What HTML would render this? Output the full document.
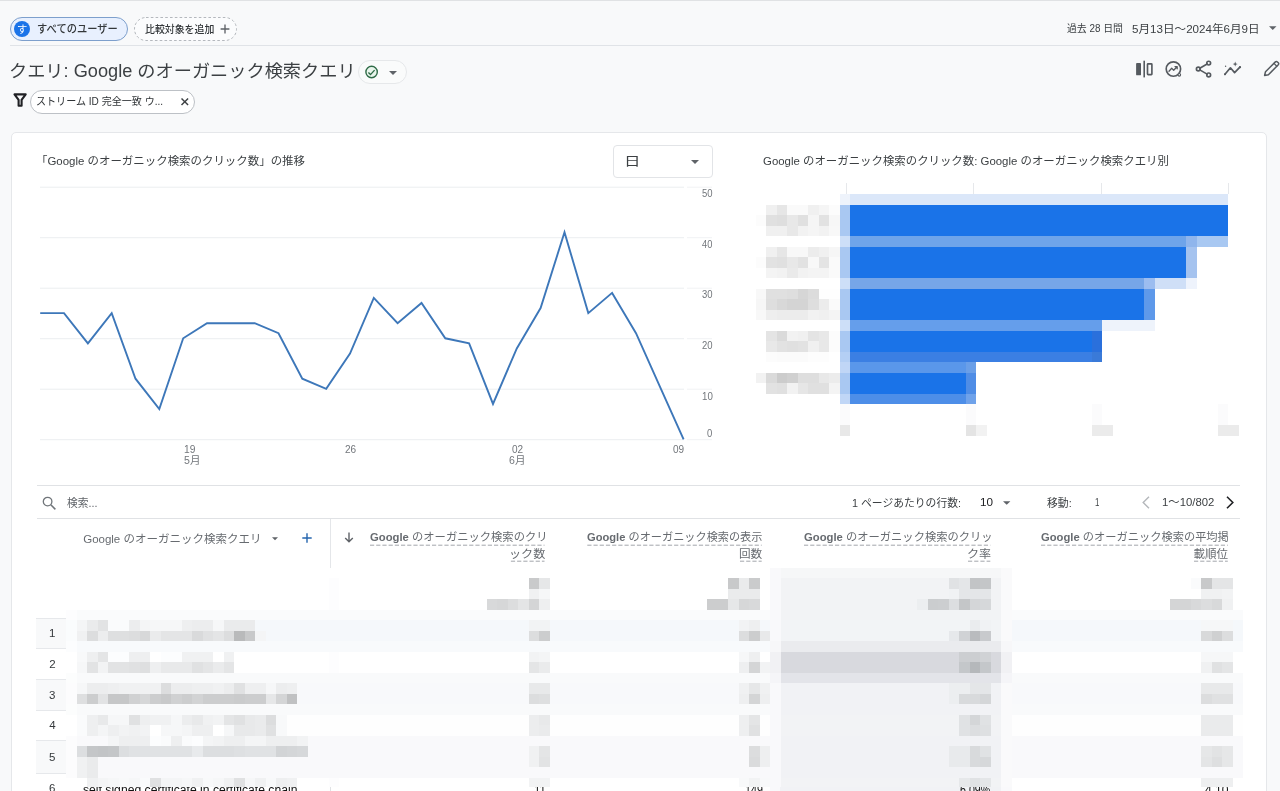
<!DOCTYPE html>
<html lang="ja"><head><meta charset="utf-8"><title>クエリ: Google のオーガニック検索クエリ</title>
<style>
*{box-sizing:border-box;margin:0;padding:0}
html,body{width:1280px;height:791px;overflow:hidden;background:#f8f9fa}
body{position:relative;font-family:"Liberation Sans","Noto Sans CJK JP",sans-serif}
.a{position:absolute}
.L{position:absolute;left:0;top:0;width:1280px;height:791px;will-change:transform}
.t{position:absolute;white-space:nowrap;line-height:1;transform-origin:0 50%;display:block}
svg{position:absolute;overflow:visible}
</style></head>
<body>
<div class="a" style="left:0;top:0;width:1280px;height:1px;background:#e0e2e4"></div>
<div class="a" style="left:10px;top:45px;width:1270px;height:1px;background:#e0e3e7"></div>
<div class="a" style="left:10px;top:17px;width:118px;height:24px;border:1px solid #7d9fcc;border-radius:12px;background:#e8f0fe"></div>
<div class="a" style="left:14px;top:21px;width:16px;height:16px;border-radius:8px;background:#1a73e8"></div>
<svg style="left:134px;top:17px" width="103" height="24" viewBox="0 0 103 24"><rect x="0.5" y="0.5" width="102" height="23" rx="11.5" fill="#fbfcfd" stroke="#b4b8bd" stroke-width="1" stroke-dasharray="2.6 2.2"/></svg>
<svg style="left:220.4px;top:23.6px" width="10" height="10" viewBox="0 0 10 10"><path d="M5 0.6v8.8M0.6 5h8.8" stroke="#5f6368" stroke-width="1.35" fill="none"/></svg>
<svg style="left:1268.5px;top:26px" width="7.5" height="4" viewBox="0 0 8 4"><path d="M0 0h8L4 4z" fill="#5f6368"/></svg>
<div class="a" style="left:357.5px;top:60px;width:49px;height:23.5px;border:1px solid #e6e8ea;border-radius:12px;background:#fafbfb"></div>
<svg style="left:364px;top:65px" width="15" height="15" viewBox="0 0 15 15"><circle cx="7.6" cy="7" r="5.7" fill="#e9f5ec" stroke="#2f6b47" stroke-width="1.4"/><path d="M4.4 7.5l2.1 2.1 4.1-4.5" fill="none" stroke="#2f6b47" stroke-width="1.4"/></svg>
<svg style="left:388.5px;top:70.5px" width="8" height="4" viewBox="0 0 8 4"><path d="M0 0h8L4 4z" fill="#5f6368"/></svg>
<svg style="left:13px;top:93px" width="14" height="14" viewBox="0 0 14 14"><path d="M1.5 1.4h11.2L8.6 6.9v5.8H5.6V6.9z" fill="none" stroke="#202124" stroke-width="2.1" stroke-linejoin="round"/></svg>
<div class="a" style="left:30px;top:90px;width:165px;height:24px;border:1px solid #bdc1c6;border-radius:12px;background:#ffffff"></div>
<svg style="left:180.9px;top:97.7px" width="7.6" height="7.6" viewBox="0 0 9 9"><path d="M0.6 0.6l7.8 7.8M8.4 0.6l-7.8 7.8" stroke="#3c4043" stroke-width="1.7" fill="none"/></svg>
<svg style="left:1125px;top:52px" width="155" height="40" viewBox="0 0 155 40" fill="none" stroke="#555a5f" stroke-width="1.65" stroke-linecap="round" stroke-linejoin="round"><rect x="11.1" y="11.1" width="4.9" height="12.2" rx="0.9" fill="#555a5f" stroke="none"/><rect x="18.4" y="8.7" width="1.6" height="16.7" fill="#555a5f" stroke="none"/><rect x="22.5" y="11.8" width="4.4" height="10.8" rx="0.6"/><circle cx="48.4" cy="17" r="7.2"/><path d="M44 19.2l2.7-2.9 2 1.9 3.3-3.4M50 14.6h2.2v2.2" stroke-width="1.3"/><circle cx="54.3" cy="22.8" r="1.3" fill="#f8f9fa" stroke-width="1.1"/><path d="M74.8 16.2l7.3-4.2M74.8 17.9l7.3 4.2"/><circle cx="73.3" cy="17" r="1.9"/><circle cx="83.7" cy="11.1" r="1.9"/><circle cx="83.7" cy="22.9" r="1.9"/><path d="M100 22.3l5.4-6.5 4.2 4.8 5.3-5.4" stroke-width="1.7"/><circle cx="100" cy="22.3" r="1" fill="#555a5f" stroke="none"/><circle cx="115" cy="15.2" r="1.1" fill="#555a5f" stroke="none"/><path d="M110.2 9.6l.7 1.8 1.8.7-1.8.7-.7 1.8-.7-1.8-1.8-.7 1.8-.7z" fill="#555a5f" stroke="none"/><circle cx="100.6" cy="14.2" r="0.7" fill="#555a5f" stroke="none"/><path d="M139.6 23.4l.9-3.6 9.9-9.9a1.4 1.4 0 0 1 2 0l.9.9a1.4 1.4 0 0 1 0 2l-9.9 9.9z" stroke-width="1.5"/><path d="M149 11.4l2.8 2.8" stroke-width="1.3"/></svg>
<div class="a" style="left:10.5px;top:132px;width:1256.5px;height:700px;border:1px solid #e5e7ea;border-radius:5px;background:#ffffff"></div>
<div class="a" style="left:613px;top:145px;width:100px;height:33px;border:1px solid #e2e4e7;border-radius:4px;background:#ffffff"></div>
<svg style="left:691px;top:160px" width="8" height="4" viewBox="0 0 8 4"><path d="M0 0h8L4 4z" fill="#5f6368"/></svg>
<svg style="left:0;top:0" width="1280" height="791" viewBox="0 0 1280 791"><rect x="40" y="186.7" width="644" height="1" fill="#eceef0"/><rect x="40" y="237.2" width="644" height="1" fill="#eceef0"/><rect x="40" y="287.7" width="644" height="1" fill="#eceef0"/><rect x="40" y="338.2" width="644" height="1" fill="#eceef0"/><rect x="40" y="388.7" width="644" height="1" fill="#eceef0"/><rect x="40" y="439.2" width="644" height="1" fill="#eceef0"/><rect x="687" y="186.7" width="25" height="1" fill="#f1f2f4"/><rect x="687" y="237.2" width="25" height="1" fill="#f1f2f4"/><rect x="687" y="287.7" width="25" height="1" fill="#f1f2f4"/><rect x="687" y="338.2" width="25" height="1" fill="#f1f2f4"/><rect x="687" y="388.7" width="25" height="1" fill="#f1f2f4"/><rect x="687" y="439.2" width="25" height="1" fill="#f1f2f4"/><polyline points="40.2,313.1 64.0,313.1 87.9,343.4 111.7,313.1 135.5,378.7 159.3,409.0 183.2,338.3 207.0,323.2 230.8,323.2 254.7,323.2 278.5,333.2 302.3,378.7 326.2,388.8 350.0,353.5 373.8,297.9 397.6,323.2 421.5,303.0 445.3,338.3 469.1,343.4 493.0,403.9 516.8,348.4 540.6,308.0 564.5,232.3 588.3,313.1 612.1,292.9 636.0,333.2 659.8,386.3 683.6,439.3" fill="none" stroke="#3d77b9" stroke-width="1.9" stroke-linejoin="miter"/></svg>
<svg style="left:0;top:0" width="1280" height="791" viewBox="0 0 1280 791" shape-rendering="crispEdges"><rect x="845.9" y="182.5" width="1" height="11.5" fill="#e6e8eb"/><rect x="972.7" y="182.5" width="1" height="11.5" fill="#e6e8eb"/><rect x="1101.0" y="182.5" width="1" height="11.5" fill="#e6e8eb"/><rect x="1228.0" y="182.5" width="1" height="11.5" fill="#e6e8eb"/><rect x="839.50" y="194.00" width="10.50" height="10.50" fill="#eef3fb"/><rect x="850.00" y="194.00" width="378.00" height="10.50" fill="#dbe7f9"/><rect x="839.50" y="204.50" width="10.50" height="10.50" fill="#a9c8f2"/><rect x="850.00" y="204.50" width="378.00" height="10.50" fill="#1a73e8"/><rect x="839.50" y="215.00" width="10.50" height="10.50" fill="#a9c8f2"/><rect x="850.00" y="215.00" width="378.00" height="10.50" fill="#1a73e8"/><rect x="839.50" y="225.50" width="10.50" height="10.50" fill="#a9c8f2"/><rect x="850.00" y="225.50" width="378.00" height="10.50" fill="#1a73e8"/><rect x="839.50" y="236.00" width="10.50" height="10.50" fill="#cddff8"/><rect x="850.00" y="236.00" width="336.00" height="10.50" fill="#6ea4ea"/><rect x="1186.00" y="236.00" width="10.50" height="10.50" fill="#8fb5ec"/><rect x="1196.50" y="236.00" width="31.50" height="10.50" fill="#a8c8f2"/><rect x="839.50" y="246.50" width="10.50" height="10.50" fill="#a9c8f2"/><rect x="850.00" y="246.50" width="336.00" height="10.50" fill="#1a73e8"/><rect x="1186.00" y="246.50" width="10.50" height="10.50" fill="#a5c3ef"/><rect x="839.50" y="257.00" width="10.50" height="10.50" fill="#a9c8f2"/><rect x="850.00" y="257.00" width="336.00" height="10.50" fill="#1a73e8"/><rect x="1186.00" y="257.00" width="10.50" height="10.50" fill="#a5c3ef"/><rect x="839.50" y="267.50" width="10.50" height="10.50" fill="#a9c8f2"/><rect x="850.00" y="267.50" width="336.00" height="10.50" fill="#1a73e8"/><rect x="1186.00" y="267.50" width="10.50" height="10.50" fill="#a5c3ef"/><rect x="839.50" y="278.00" width="10.50" height="10.50" fill="#cddff8"/><rect x="850.00" y="278.00" width="294.00" height="10.50" fill="#76a6e8"/><rect x="1144.00" y="278.00" width="10.50" height="10.50" fill="#9cbdf0"/><rect x="1154.50" y="278.00" width="31.50" height="10.50" fill="#cfdff7"/><rect x="1186.00" y="278.00" width="10.50" height="10.50" fill="#eef3fc"/><rect x="839.50" y="288.50" width="10.50" height="10.50" fill="#a9c8f2"/><rect x="850.00" y="288.50" width="294.00" height="10.50" fill="#1a73e8"/><rect x="1144.00" y="288.50" width="10.50" height="10.50" fill="#5e99ea"/><rect x="839.50" y="299.00" width="10.50" height="10.50" fill="#a9c8f2"/><rect x="850.00" y="299.00" width="294.00" height="10.50" fill="#1a73e8"/><rect x="1144.00" y="299.00" width="10.50" height="10.50" fill="#5e99ea"/><rect x="839.50" y="309.50" width="10.50" height="10.50" fill="#a9c8f2"/><rect x="850.00" y="309.50" width="294.00" height="10.50" fill="#1a73e8"/><rect x="1144.00" y="309.50" width="10.50" height="10.50" fill="#5e99ea"/><rect x="839.50" y="320.00" width="10.50" height="10.50" fill="#cddff8"/><rect x="850.00" y="320.00" width="252.00" height="10.50" fill="#659eeb"/><rect x="1102.00" y="320.00" width="52.50" height="10.50" fill="#eef3fb"/><rect x="839.50" y="330.50" width="10.50" height="10.50" fill="#a9c8f2"/><rect x="850.00" y="330.50" width="241.50" height="10.50" fill="#1a73e8"/><rect x="1091.50" y="330.50" width="10.50" height="10.50" fill="#2a70dc"/><rect x="839.50" y="341.00" width="10.50" height="10.50" fill="#a9c8f2"/><rect x="850.00" y="341.00" width="241.50" height="10.50" fill="#1a73e8"/><rect x="1091.50" y="341.00" width="10.50" height="10.50" fill="#2a70dc"/><rect x="839.50" y="351.50" width="10.50" height="10.50" fill="#b4cff4"/><rect x="850.00" y="351.50" width="241.50" height="10.50" fill="#3b7fe3"/><rect x="1091.50" y="351.50" width="10.50" height="10.50" fill="#3a7ad8"/><rect x="839.50" y="362.00" width="10.50" height="10.50" fill="#c0d6f6"/><rect x="850.00" y="362.00" width="115.50" height="10.50" fill="#5a97ea"/><rect x="965.50" y="362.00" width="10.50" height="10.50" fill="#6a9fe8"/><rect x="839.50" y="372.50" width="10.50" height="10.50" fill="#a9c8f2"/><rect x="850.00" y="372.50" width="115.50" height="10.50" fill="#1a73e8"/><rect x="965.50" y="372.50" width="10.50" height="10.50" fill="#4f8de6"/><rect x="839.50" y="383.00" width="10.50" height="10.50" fill="#a9c8f2"/><rect x="850.00" y="383.00" width="115.50" height="10.50" fill="#1a73e8"/><rect x="965.50" y="383.00" width="10.50" height="10.50" fill="#4f8de6"/><rect x="839.50" y="393.50" width="10.50" height="10.50" fill="#c0d6f6"/><rect x="850.00" y="393.50" width="115.50" height="10.50" fill="#4d8ee8"/><rect x="965.50" y="393.50" width="10.50" height="10.50" fill="#6fa2ea"/><rect x="839.50" y="404.00" width="10.50" height="10.50" fill="#fbfbfc"/><rect x="965.50" y="404.00" width="10.50" height="10.50" fill="#fbfbfc"/><rect x="1091.50" y="404.00" width="10.50" height="10.50" fill="#fbfbfc"/><rect x="1217.50" y="404.00" width="10.50" height="10.50" fill="#fbfbfc"/><rect x="839.50" y="414.50" width="10.50" height="10.50" fill="#fbfbfc"/><rect x="965.50" y="414.50" width="10.50" height="10.50" fill="#fbfbfc"/><rect x="1091.50" y="414.50" width="10.50" height="10.50" fill="#fbfbfc"/><rect x="1217.50" y="414.50" width="10.50" height="10.50" fill="#fbfbfc"/><rect x="839.50" y="425.00" width="10.50" height="10.50" fill="#e8e8e8"/><rect x="965.50" y="425.00" width="10.50" height="10.50" fill="#e4e4e4"/><rect x="976.00" y="425.00" width="10.50" height="10.50" fill="#f2f2f2"/><rect x="1091.50" y="425.00" width="21.00" height="10.50" fill="#ebebeb"/><rect x="1217.50" y="425.00" width="21.00" height="10.50" fill="#ebebeb"/><rect x="766.00" y="204.50" width="10.50" height="10.50" fill="#f0f0f0"/><rect x="776.50" y="204.50" width="10.50" height="10.50" fill="#e6e6e6"/><rect x="787.00" y="204.50" width="10.50" height="10.50" fill="#fafafa"/><rect x="797.50" y="204.50" width="10.50" height="10.50" fill="#fafafa"/><rect x="808.00" y="204.50" width="10.50" height="10.50" fill="#f0f0f0"/><rect x="818.50" y="204.50" width="10.50" height="10.50" fill="#f5f5f5"/><rect x="829.00" y="204.50" width="10.50" height="10.50" fill="#fcfcfc"/><rect x="755.50" y="215.00" width="10.50" height="10.50" fill="#fcfcfc"/><rect x="766.00" y="215.00" width="10.50" height="10.50" fill="#e0e0e0"/><rect x="776.50" y="215.00" width="10.50" height="10.50" fill="#dedede"/><rect x="787.00" y="215.00" width="10.50" height="10.50" fill="#e8e8e8"/><rect x="797.50" y="215.00" width="10.50" height="10.50" fill="#e0e0e0"/><rect x="808.00" y="215.00" width="10.50" height="10.50" fill="#f5f5f5"/><rect x="818.50" y="215.00" width="10.50" height="10.50" fill="#e2e2e2"/><rect x="829.00" y="215.00" width="10.50" height="10.50" fill="#f7f7f7"/><rect x="766.00" y="225.50" width="10.50" height="10.50" fill="#f0f0f0"/><rect x="776.50" y="225.50" width="10.50" height="10.50" fill="#f0f0f0"/><rect x="787.00" y="225.50" width="10.50" height="10.50" fill="#e8e8e8"/><rect x="797.50" y="225.50" width="10.50" height="10.50" fill="#f2f2f2"/><rect x="808.00" y="225.50" width="10.50" height="10.50" fill="#f5f5f5"/><rect x="818.50" y="225.50" width="10.50" height="10.50" fill="#f2f2f2"/><rect x="829.00" y="225.50" width="10.50" height="10.50" fill="#f8f8f8"/><rect x="766.00" y="246.50" width="10.50" height="10.50" fill="#f0f0f0"/><rect x="776.50" y="246.50" width="10.50" height="10.50" fill="#e6e6e6"/><rect x="787.00" y="246.50" width="10.50" height="10.50" fill="#f8f8f8"/><rect x="797.50" y="246.50" width="10.50" height="10.50" fill="#f8f8f8"/><rect x="808.00" y="246.50" width="10.50" height="10.50" fill="#ececec"/><rect x="818.50" y="246.50" width="10.50" height="10.50" fill="#f0f0f0"/><rect x="829.00" y="246.50" width="10.50" height="10.50" fill="#f6f6f6"/><rect x="755.50" y="257.00" width="10.50" height="10.50" fill="#fcfcfc"/><rect x="766.00" y="257.00" width="10.50" height="10.50" fill="#e2e2e2"/><rect x="776.50" y="257.00" width="10.50" height="10.50" fill="#e0e0e0"/><rect x="787.00" y="257.00" width="10.50" height="10.50" fill="#e8e8e8"/><rect x="797.50" y="257.00" width="10.50" height="10.50" fill="#e2e2e2"/><rect x="808.00" y="257.00" width="10.50" height="10.50" fill="#f8f8f8"/><rect x="818.50" y="257.00" width="10.50" height="10.50" fill="#e4e4e4"/><rect x="829.00" y="257.00" width="10.50" height="10.50" fill="#fafafa"/><rect x="766.00" y="267.50" width="10.50" height="10.50" fill="#f4f4f4"/><rect x="776.50" y="267.50" width="10.50" height="10.50" fill="#f2f2f2"/><rect x="787.00" y="267.50" width="10.50" height="10.50" fill="#eaeaea"/><rect x="797.50" y="267.50" width="10.50" height="10.50" fill="#f2f2f2"/><rect x="808.00" y="267.50" width="10.50" height="10.50" fill="#f4f4f4"/><rect x="818.50" y="267.50" width="10.50" height="10.50" fill="#f4f4f4"/><rect x="829.00" y="267.50" width="10.50" height="10.50" fill="#fafafa"/><rect x="755.50" y="288.50" width="10.50" height="10.50" fill="#f8f8f8"/><rect x="766.00" y="288.50" width="10.50" height="10.50" fill="#e0e0e0"/><rect x="776.50" y="288.50" width="10.50" height="10.50" fill="#e0e0e0"/><rect x="787.00" y="288.50" width="10.50" height="10.50" fill="#dedede"/><rect x="797.50" y="288.50" width="10.50" height="10.50" fill="#d6d6d6"/><rect x="808.00" y="288.50" width="10.50" height="10.50" fill="#dcdcdc"/><rect x="818.50" y="288.50" width="10.50" height="10.50" fill="#fefefe"/><rect x="829.00" y="288.50" width="10.50" height="10.50" fill="#fefefe"/><rect x="755.50" y="299.00" width="10.50" height="10.50" fill="#f6f6f6"/><rect x="766.00" y="299.00" width="10.50" height="10.50" fill="#dedede"/><rect x="776.50" y="299.00" width="10.50" height="10.50" fill="#d8d8d8"/><rect x="787.00" y="299.00" width="10.50" height="10.50" fill="#d4d4d4"/><rect x="797.50" y="299.00" width="10.50" height="10.50" fill="#d4d4d4"/><rect x="808.00" y="299.00" width="10.50" height="10.50" fill="#dedede"/><rect x="818.50" y="299.00" width="10.50" height="10.50" fill="#ececec"/><rect x="829.00" y="299.00" width="10.50" height="10.50" fill="#fafafa"/><rect x="755.50" y="309.50" width="10.50" height="10.50" fill="#f8f8f8"/><rect x="766.00" y="309.50" width="10.50" height="10.50" fill="#eeeeee"/><rect x="776.50" y="309.50" width="10.50" height="10.50" fill="#ececec"/><rect x="787.00" y="309.50" width="10.50" height="10.50" fill="#ececec"/><rect x="797.50" y="309.50" width="10.50" height="10.50" fill="#ececec"/><rect x="808.00" y="309.50" width="10.50" height="10.50" fill="#f2f2f2"/><rect x="818.50" y="309.50" width="10.50" height="10.50" fill="#f0f0f0"/><rect x="829.00" y="309.50" width="10.50" height="10.50" fill="#f4f4f4"/><rect x="766.00" y="330.50" width="10.50" height="10.50" fill="#e4e4e4"/><rect x="776.50" y="330.50" width="10.50" height="10.50" fill="#dadada"/><rect x="787.00" y="330.50" width="10.50" height="10.50" fill="#f2f2f2"/><rect x="797.50" y="330.50" width="10.50" height="10.50" fill="#f0f0f0"/><rect x="808.00" y="330.50" width="10.50" height="10.50" fill="#e4e4e4"/><rect x="818.50" y="330.50" width="10.50" height="10.50" fill="#e8e8e8"/><rect x="829.00" y="330.50" width="10.50" height="10.50" fill="#fcfcfc"/><rect x="766.00" y="341.00" width="10.50" height="10.50" fill="#e8e8e8"/><rect x="776.50" y="341.00" width="10.50" height="10.50" fill="#e2e2e2"/><rect x="787.00" y="341.00" width="10.50" height="10.50" fill="#e0e0e0"/><rect x="797.50" y="341.00" width="10.50" height="10.50" fill="#e2e2e2"/><rect x="808.00" y="341.00" width="10.50" height="10.50" fill="#f0f0f0"/><rect x="818.50" y="341.00" width="10.50" height="10.50" fill="#e8e8e8"/><rect x="829.00" y="341.00" width="10.50" height="10.50" fill="#fcfcfc"/><rect x="766.00" y="351.50" width="10.50" height="10.50" fill="#fcfcfc"/><rect x="776.50" y="351.50" width="10.50" height="10.50" fill="#fbfbfb"/><rect x="787.00" y="351.50" width="10.50" height="10.50" fill="#fbfbfb"/><rect x="797.50" y="351.50" width="10.50" height="10.50" fill="#fbfbfb"/><rect x="808.00" y="351.50" width="10.50" height="10.50" fill="#fdfdfd"/><rect x="818.50" y="351.50" width="10.50" height="10.50" fill="#fdfdfd"/><rect x="755.50" y="372.50" width="10.50" height="10.50" fill="#f2f2f2"/><rect x="766.00" y="372.50" width="10.50" height="10.50" fill="#dadada"/><rect x="776.50" y="372.50" width="10.50" height="10.50" fill="#cccccc"/><rect x="787.00" y="372.50" width="10.50" height="10.50" fill="#d0d0d0"/><rect x="797.50" y="372.50" width="10.50" height="10.50" fill="#dedede"/><rect x="808.00" y="372.50" width="10.50" height="10.50" fill="#dedede"/><rect x="818.50" y="372.50" width="10.50" height="10.50" fill="#e8e8e8"/><rect x="829.00" y="372.50" width="10.50" height="10.50" fill="#ececec"/><rect x="766.00" y="383.00" width="10.50" height="10.50" fill="#e2e2e2"/><rect x="776.50" y="383.00" width="10.50" height="10.50" fill="#e0e0e0"/><rect x="787.00" y="383.00" width="10.50" height="10.50" fill="#f2f2f2"/><rect x="797.50" y="383.00" width="10.50" height="10.50" fill="#e6e6e6"/><rect x="808.00" y="383.00" width="10.50" height="10.50" fill="#e0e0e0"/><rect x="818.50" y="383.00" width="10.50" height="10.50" fill="#e0e0e0"/><rect x="829.00" y="383.00" width="10.50" height="10.50" fill="#f4f4f4"/></svg>
<div class="a" style="left:37px;top:485px;width:1203px;height:1px;background:#e0e2e5"></div>
<div class="a" style="left:37px;top:518px;width:1203px;height:1px;background:#e0e2e5"></div>
<svg style="left:42px;top:496px" width="15" height="15" viewBox="0 0 15 15"><circle cx="5.6" cy="5.6" r="4.3" fill="none" stroke="#70757a" stroke-width="1.3"/><path d="M8.8 8.8l4.6 4.6" stroke="#70757a" stroke-width="1.5"/></svg>
<svg style="left:1003px;top:500.5px" width="7.4" height="4" viewBox="0 0 8 4"><path d="M0 0h8L4 4z" fill="#5f6368"/></svg>
<svg style="left:1141.5px;top:496px" width="8" height="13" viewBox="0 0 8 13"><path d="M7 0.8L1.2 6.5 7 12.2" fill="none" stroke="#b4b7bb" stroke-width="1.4"/></svg>
<svg style="left:1226px;top:496px" width="8" height="13" viewBox="0 0 8 13"><path d="M1 0.8l5.8 5.7L1 12.2" fill="none" stroke="#202124" stroke-width="1.6"/></svg>
<svg style="left:272px;top:537.3px" width="6" height="3.4" viewBox="0 0 8 4"><path d="M0 0h8L4 4z" fill="#5f6368"/></svg>
<svg style="left:302px;top:533px" width="10" height="10" viewBox="0 0 10 10"><path d="M5 0.3v9.4M0.3 5h9.4" stroke="#2565ae" stroke-width="1.4" fill="none"/></svg>
<div class="a" style="left:330px;top:519px;width:1px;height:49px;background:#e4e6e9"></div>
<svg style="left:344px;top:532px" width="10" height="11" viewBox="0 0 10 11"><path d="M5 0.5v9M1.2 6l3.8 3.8L8.8 6" fill="none" stroke="#5f6368" stroke-width="1.4"/></svg>
<svg style="left:0;top:0" width="1280" height="791" viewBox="0 0 1280 791" fill="none" stroke="#a2a6ab" stroke-width="1" stroke-dasharray="4.2 2"><path d="M370.0 545.2H544.5 M510.9 561.2H544.5"/><path d="M587.3 545.2H761.7 M740.0 561.2H761.7"/><path d="M804.0 545.2H990.3 M968.0 561.2H990.3"/><path d="M1041.0 545.2H1227.8 M1194.0 561.2H1227.8"/></svg>
<div class="a" style="left:330px;top:786px;width:1px;height:6px;background:#e0e2e5"></div>
<div class="a" style="left:769.75px;top:786px;width:242px;height:6px;background:#f9f9fb"></div>
<div class="a" style="left:780.25px;top:786px;width:220.5px;height:6px;background:#f1f2f5"></div>
<div class="L"><span class="t" style="left:82.75px;top:784px;font-size:12px;color:#111111;transform:scaleX(1.0143);">self signed certificate in certificate chain</span>
<span class="t" style="left:533.55px;top:784px;font-size:12px;color:#111111;transform:scaleX(0.9545);">11</span>
<span class="t" style="left:744.61px;top:784px;font-size:12px;color:#111111;transform:scaleX(0.8919);">149</span>
<span class="t" style="left:960.36px;top:784px;font-size:12px;color:#111111;transform:scaleX(0.8872);">6.09%</span>
<span class="t" style="left:1204.75px;top:784px;font-size:12px;color:#111111;transform:scaleX(1.0110);">4.10</span></div>
<svg style="left:0;top:0" width="1280" height="791" viewBox="0 0 1280 791" shape-rendering="crispEdges"><rect x="66.24" y="567.50" width="1176.90" height="10.50" fill="#ffffff"/><rect x="770.28" y="567.50" width="10.51" height="10.50" fill="#f9f9fb"/><rect x="780.79" y="567.50" width="220.67" height="10.50" fill="#f6f7f8"/><rect x="1001.45" y="567.50" width="10.51" height="10.50" fill="#fafafb"/><rect x="66.24" y="578.00" width="1176.90" height="10.50" fill="#ffffff"/><rect x="328.94" y="578.00" width="10.51" height="10.50" fill="#fdfdfe"/><rect x="770.28" y="578.00" width="10.51" height="10.50" fill="#f9f9fb"/><rect x="780.79" y="578.00" width="220.67" height="10.50" fill="#f2f3f5"/><rect x="1001.45" y="578.00" width="10.51" height="10.50" fill="#fafafb"/><rect x="66.24" y="588.50" width="1176.90" height="10.50" fill="#ffffff"/><rect x="328.94" y="588.50" width="10.51" height="10.50" fill="#fdfdfe"/><rect x="770.28" y="588.50" width="10.51" height="10.50" fill="#f9f9fb"/><rect x="780.79" y="588.50" width="220.67" height="10.50" fill="#f2f3f5"/><rect x="1001.45" y="588.50" width="10.51" height="10.50" fill="#fafafb"/><rect x="66.24" y="599.00" width="1176.90" height="10.50" fill="#ffffff"/><rect x="328.94" y="599.00" width="10.51" height="10.50" fill="#fdfdfe"/><rect x="770.28" y="599.00" width="10.51" height="10.50" fill="#f9f9fb"/><rect x="780.79" y="599.00" width="220.67" height="10.50" fill="#f2f3f5"/><rect x="1001.45" y="599.00" width="10.51" height="10.50" fill="#fafafb"/><rect x="66.24" y="609.50" width="1176.90" height="10.50" fill="#fafbfc"/><rect x="66.24" y="609.50" width="10.51" height="10.50" fill="#fdfdfe"/><rect x="328.94" y="609.50" width="10.51" height="10.50" fill="#fafbfc"/><rect x="770.28" y="609.50" width="10.51" height="10.50" fill="#f9f9fb"/><rect x="780.79" y="609.50" width="220.67" height="10.50" fill="#f2f3f5"/><rect x="1001.45" y="609.50" width="10.51" height="10.50" fill="#fafafb"/><rect x="66.24" y="620.00" width="1176.90" height="10.50" fill="#f5f8fb"/><rect x="66.24" y="620.00" width="10.51" height="10.50" fill="#fafcfd"/><rect x="328.94" y="620.00" width="10.51" height="10.50" fill="#f5f8fb"/><rect x="770.28" y="620.00" width="10.51" height="10.50" fill="#f9f9fb"/><rect x="780.79" y="620.00" width="220.67" height="10.50" fill="#f2f4f6"/><rect x="1001.45" y="620.00" width="10.51" height="10.50" fill="#fafafb"/><rect x="66.24" y="630.50" width="1176.90" height="10.50" fill="#f5f8fb"/><rect x="66.24" y="630.50" width="10.51" height="10.50" fill="#fafcfd"/><rect x="328.94" y="630.50" width="10.51" height="10.50" fill="#f5f8fb"/><rect x="770.28" y="630.50" width="10.51" height="10.50" fill="#f9f9fb"/><rect x="780.79" y="630.50" width="220.67" height="10.50" fill="#f2f4f6"/><rect x="1001.45" y="630.50" width="10.51" height="10.50" fill="#fafafb"/><rect x="66.24" y="641.00" width="1176.90" height="10.50" fill="#f8fafc"/><rect x="66.24" y="641.00" width="10.51" height="10.50" fill="#fcfdfe"/><rect x="328.94" y="641.00" width="10.51" height="10.50" fill="#f8fafc"/><rect x="770.28" y="641.00" width="10.51" height="10.50" fill="#f7f7f9"/><rect x="780.79" y="641.00" width="220.67" height="10.50" fill="#eaebee"/><rect x="1001.45" y="641.00" width="10.51" height="10.50" fill="#f7f7f9"/><rect x="66.24" y="651.50" width="1176.90" height="10.50" fill="#ffffff"/><rect x="328.94" y="651.50" width="10.51" height="10.50" fill="#fdfdfe"/><rect x="770.28" y="651.50" width="10.51" height="10.50" fill="#f1f1f4"/><rect x="780.79" y="651.50" width="220.67" height="10.50" fill="#d8d9de"/><rect x="1001.45" y="651.50" width="10.51" height="10.50" fill="#f1f1f4"/><rect x="66.24" y="662.00" width="1176.90" height="10.50" fill="#ffffff"/><rect x="328.94" y="662.00" width="10.51" height="10.50" fill="#fdfdfe"/><rect x="770.28" y="662.00" width="10.51" height="10.50" fill="#f1f1f4"/><rect x="780.79" y="662.00" width="220.67" height="10.50" fill="#d8d9de"/><rect x="1001.45" y="662.00" width="10.51" height="10.50" fill="#f1f1f4"/><rect x="66.24" y="672.50" width="1176.90" height="10.50" fill="#f9fafb"/><rect x="66.24" y="672.50" width="10.51" height="10.50" fill="#fcfdfd"/><rect x="328.94" y="672.50" width="10.51" height="10.50" fill="#f9fafb"/><rect x="770.28" y="672.50" width="10.51" height="10.50" fill="#f5f5f8"/><rect x="780.79" y="672.50" width="220.67" height="10.50" fill="#e3e4e9"/><rect x="1001.45" y="672.50" width="10.51" height="10.50" fill="#f5f5f8"/><rect x="66.24" y="683.00" width="1176.90" height="10.50" fill="#f8f9fb"/><rect x="66.24" y="683.00" width="10.51" height="10.50" fill="#fcfcfd"/><rect x="328.94" y="683.00" width="10.51" height="10.50" fill="#f8f9fb"/><rect x="770.28" y="683.00" width="10.51" height="10.50" fill="#f9f9fb"/><rect x="780.79" y="683.00" width="220.67" height="10.50" fill="#f1f2f5"/><rect x="1001.45" y="683.00" width="10.51" height="10.50" fill="#fafafb"/><rect x="66.24" y="693.50" width="1176.90" height="10.50" fill="#f8f9fb"/><rect x="66.24" y="693.50" width="10.51" height="10.50" fill="#fcfcfd"/><rect x="328.94" y="693.50" width="10.51" height="10.50" fill="#f8f9fb"/><rect x="770.28" y="693.50" width="10.51" height="10.50" fill="#f9f9fb"/><rect x="780.79" y="693.50" width="220.67" height="10.50" fill="#f1f2f5"/><rect x="1001.45" y="693.50" width="10.51" height="10.50" fill="#fafafb"/><rect x="66.24" y="704.00" width="1176.90" height="10.50" fill="#f9fafb"/><rect x="66.24" y="704.00" width="10.51" height="10.50" fill="#fcfdfd"/><rect x="328.94" y="704.00" width="10.51" height="10.50" fill="#f9fafb"/><rect x="770.28" y="704.00" width="10.51" height="10.50" fill="#f9f9fb"/><rect x="780.79" y="704.00" width="220.67" height="10.50" fill="#f1f2f5"/><rect x="1001.45" y="704.00" width="10.51" height="10.50" fill="#fafafb"/><rect x="66.24" y="714.50" width="1176.90" height="10.50" fill="#fefefe"/><rect x="66.24" y="714.50" width="10.51" height="10.50" fill="#ffffff"/><rect x="328.94" y="714.50" width="10.51" height="10.50" fill="#fefefe"/><rect x="770.28" y="714.50" width="10.51" height="10.50" fill="#f9f9fb"/><rect x="780.79" y="714.50" width="220.67" height="10.50" fill="#f2f3f5"/><rect x="1001.45" y="714.50" width="10.51" height="10.50" fill="#fafafb"/><rect x="66.24" y="725.00" width="1176.90" height="10.50" fill="#fefefe"/><rect x="66.24" y="725.00" width="10.51" height="10.50" fill="#ffffff"/><rect x="328.94" y="725.00" width="10.51" height="10.50" fill="#fefefe"/><rect x="770.28" y="725.00" width="10.51" height="10.50" fill="#f9f9fb"/><rect x="780.79" y="725.00" width="220.67" height="10.50" fill="#f2f3f5"/><rect x="1001.45" y="725.00" width="10.51" height="10.50" fill="#fafafb"/><rect x="66.24" y="735.50" width="1176.90" height="10.50" fill="#f9f9fb"/><rect x="66.24" y="735.50" width="10.51" height="10.50" fill="#fcfcfd"/><rect x="328.94" y="735.50" width="10.51" height="10.50" fill="#f9f9fb"/><rect x="770.28" y="735.50" width="10.51" height="10.50" fill="#f9f9fb"/><rect x="780.79" y="735.50" width="220.67" height="10.50" fill="#f1f2f5"/><rect x="1001.45" y="735.50" width="10.51" height="10.50" fill="#fafafb"/><rect x="66.24" y="746.00" width="1176.90" height="10.50" fill="#f9f9fb"/><rect x="66.24" y="746.00" width="10.51" height="10.50" fill="#fcfcfd"/><rect x="328.94" y="746.00" width="10.51" height="10.50" fill="#f9f9fb"/><rect x="770.28" y="746.00" width="10.51" height="10.50" fill="#f9f9fb"/><rect x="780.79" y="746.00" width="220.67" height="10.50" fill="#f1f2f5"/><rect x="1001.45" y="746.00" width="10.51" height="10.50" fill="#fafafb"/><rect x="66.24" y="756.50" width="1176.90" height="10.50" fill="#f9f9fb"/><rect x="66.24" y="756.50" width="10.51" height="10.50" fill="#fcfcfd"/><rect x="328.94" y="756.50" width="10.51" height="10.50" fill="#f9f9fb"/><rect x="770.28" y="756.50" width="10.51" height="10.50" fill="#f9f9fb"/><rect x="780.79" y="756.50" width="220.67" height="10.50" fill="#f1f2f5"/><rect x="1001.45" y="756.50" width="10.51" height="10.50" fill="#fafafb"/><rect x="66.24" y="767.00" width="1176.90" height="10.50" fill="#f9f9fb"/><rect x="66.24" y="767.00" width="10.51" height="10.50" fill="#fcfcfd"/><rect x="328.94" y="767.00" width="10.51" height="10.50" fill="#f9f9fb"/><rect x="770.28" y="767.00" width="10.51" height="10.50" fill="#f9f9fb"/><rect x="780.79" y="767.00" width="220.67" height="10.50" fill="#f1f2f5"/><rect x="1001.45" y="767.00" width="10.51" height="10.50" fill="#fafafb"/><rect x="66.24" y="777.50" width="1176.90" height="9.50" fill="#ffffff"/><rect x="328.94" y="777.50" width="10.51" height="9.50" fill="#fdfdfe"/><rect x="770.28" y="777.50" width="10.51" height="9.50" fill="#f9f9fb"/><rect x="780.79" y="777.50" width="220.67" height="9.50" fill="#f2f3f5"/><rect x="1001.45" y="777.50" width="10.51" height="9.50" fill="#fafafb"/><rect x="76.75" y="620.00" width="10.51" height="10.50" fill="#f4f5f6"/><rect x="87.26" y="620.00" width="10.51" height="10.50" fill="#eaebec"/><rect x="97.77" y="620.00" width="10.51" height="10.50" fill="#e2e3e4"/><rect x="108.27" y="620.00" width="10.51" height="10.50" fill="#fafbfc"/><rect x="118.78" y="620.00" width="10.51" height="10.50" fill="#fafbfc"/><rect x="129.29" y="620.00" width="10.51" height="10.50" fill="#ecedee"/><rect x="139.80" y="620.00" width="10.51" height="10.50" fill="#f4f5f6"/><rect x="150.31" y="620.00" width="10.51" height="10.50" fill="#f6f7f8"/><rect x="160.81" y="620.00" width="10.51" height="10.50" fill="#f6f7f8"/><rect x="171.32" y="620.00" width="10.51" height="10.50" fill="#f6f7f8"/><rect x="181.83" y="620.00" width="10.51" height="10.50" fill="#eeeff0"/><rect x="192.34" y="620.00" width="10.51" height="10.50" fill="#ecedee"/><rect x="202.85" y="620.00" width="10.51" height="10.50" fill="#ecedee"/><rect x="213.35" y="620.00" width="10.51" height="10.50" fill="#f6f7f8"/><rect x="223.86" y="620.00" width="10.51" height="10.50" fill="#eaebec"/><rect x="234.37" y="620.00" width="10.51" height="10.50" fill="#eaebec"/><rect x="244.88" y="620.00" width="10.51" height="10.50" fill="#eaebec"/><rect x="76.75" y="630.50" width="10.51" height="10.50" fill="#f0f1f2"/><rect x="87.26" y="630.50" width="10.51" height="10.50" fill="#dcddde"/><rect x="97.77" y="630.50" width="10.51" height="10.50" fill="#ecedee"/><rect x="108.27" y="630.50" width="10.51" height="10.50" fill="#dedfe0"/><rect x="118.78" y="630.50" width="10.51" height="10.50" fill="#dedfe0"/><rect x="129.29" y="630.50" width="10.51" height="10.50" fill="#dcddde"/><rect x="139.80" y="630.50" width="10.51" height="10.50" fill="#d7d8d9"/><rect x="150.31" y="630.50" width="10.51" height="10.50" fill="#eaebec"/><rect x="160.81" y="630.50" width="10.51" height="10.50" fill="#e4e5e6"/><rect x="171.32" y="630.50" width="10.51" height="10.50" fill="#e4e5e6"/><rect x="181.83" y="630.50" width="10.51" height="10.50" fill="#e4e5e6"/><rect x="192.34" y="630.50" width="10.51" height="10.50" fill="#d9dadb"/><rect x="202.85" y="630.50" width="10.51" height="10.50" fill="#e0e1e2"/><rect x="213.35" y="630.50" width="10.51" height="10.50" fill="#e4e5e6"/><rect x="223.86" y="630.50" width="10.51" height="10.50" fill="#dcddde"/><rect x="234.37" y="630.50" width="10.51" height="10.50" fill="#b9babb"/><rect x="244.88" y="630.50" width="10.51" height="10.50" fill="#c8c9ca"/><rect x="255.39" y="630.50" width="10.51" height="10.50" fill="#f4f5f6"/><rect x="76.75" y="651.50" width="10.51" height="10.50" fill="#f8f9fa"/><rect x="87.26" y="651.50" width="10.51" height="10.50" fill="#eeeff0"/><rect x="97.77" y="651.50" width="10.51" height="10.50" fill="#e4e5e6"/><rect x="108.27" y="651.50" width="10.51" height="10.50" fill="#fcfdfe"/><rect x="118.78" y="651.50" width="10.51" height="10.50" fill="#fcfdfe"/><rect x="129.29" y="651.50" width="10.51" height="10.50" fill="#eeeff0"/><rect x="139.80" y="651.50" width="10.51" height="10.50" fill="#eeeff0"/><rect x="150.31" y="651.50" width="10.51" height="10.50" fill="#ffffff"/><rect x="160.81" y="651.50" width="10.51" height="10.50" fill="#fcfdfe"/><rect x="171.32" y="651.50" width="10.51" height="10.50" fill="#fcfdfe"/><rect x="181.83" y="651.50" width="10.51" height="10.50" fill="#f0f1f2"/><rect x="192.34" y="651.50" width="10.51" height="10.50" fill="#f0f1f2"/><rect x="202.85" y="651.50" width="10.51" height="10.50" fill="#f0f1f2"/><rect x="213.35" y="651.50" width="10.51" height="10.50" fill="#ffffff"/><rect x="223.86" y="651.50" width="10.51" height="10.50" fill="#f0f1f2"/><rect x="76.75" y="662.00" width="10.51" height="10.50" fill="#f6f7f8"/><rect x="87.26" y="662.00" width="10.51" height="10.50" fill="#e2e3e4"/><rect x="97.77" y="662.00" width="10.51" height="10.50" fill="#f2f3f4"/><rect x="108.27" y="662.00" width="10.51" height="10.50" fill="#e2e3e4"/><rect x="118.78" y="662.00" width="10.51" height="10.50" fill="#e2e3e4"/><rect x="129.29" y="662.00" width="10.51" height="10.50" fill="#e0e1e2"/><rect x="139.80" y="662.00" width="10.51" height="10.50" fill="#dedfe0"/><rect x="150.31" y="662.00" width="10.51" height="10.50" fill="#eeeff0"/><rect x="160.81" y="662.00" width="10.51" height="10.50" fill="#e8e9ea"/><rect x="171.32" y="662.00" width="10.51" height="10.50" fill="#e8e9ea"/><rect x="181.83" y="662.00" width="10.51" height="10.50" fill="#e8e9ea"/><rect x="192.34" y="662.00" width="10.51" height="10.50" fill="#e0e1e2"/><rect x="202.85" y="662.00" width="10.51" height="10.50" fill="#e4e5e6"/><rect x="213.35" y="662.00" width="10.51" height="10.50" fill="#eaebec"/><rect x="223.86" y="662.00" width="10.51" height="10.50" fill="#e4e5e6"/><rect x="76.75" y="683.00" width="10.51" height="10.50" fill="#f6f7f8"/><rect x="87.26" y="683.00" width="10.51" height="10.50" fill="#ecedee"/><rect x="97.77" y="683.00" width="10.51" height="10.50" fill="#ecedee"/><rect x="108.27" y="683.00" width="10.51" height="10.50" fill="#eeeff0"/><rect x="118.78" y="683.00" width="10.51" height="10.50" fill="#f0f1f2"/><rect x="129.29" y="683.00" width="10.51" height="10.50" fill="#f0f1f2"/><rect x="139.80" y="683.00" width="10.51" height="10.50" fill="#f0f1f2"/><rect x="150.31" y="683.00" width="10.51" height="10.50" fill="#f0f1f2"/><rect x="160.81" y="683.00" width="10.51" height="10.50" fill="#dcddde"/><rect x="171.32" y="683.00" width="10.51" height="10.50" fill="#ecedee"/><rect x="181.83" y="683.00" width="10.51" height="10.50" fill="#ecedee"/><rect x="192.34" y="683.00" width="10.51" height="10.50" fill="#eeeff0"/><rect x="202.85" y="683.00" width="10.51" height="10.50" fill="#eeeff0"/><rect x="213.35" y="683.00" width="10.51" height="10.50" fill="#f0f1f2"/><rect x="223.86" y="683.00" width="10.51" height="10.50" fill="#ecedee"/><rect x="234.37" y="683.00" width="10.51" height="10.50" fill="#e0e1e2"/><rect x="244.88" y="683.00" width="10.51" height="10.50" fill="#eeeff0"/><rect x="255.39" y="683.00" width="10.51" height="10.50" fill="#eeeff0"/><rect x="265.89" y="683.00" width="10.51" height="10.50" fill="#f6f7f8"/><rect x="276.40" y="683.00" width="10.51" height="10.50" fill="#ecedee"/><rect x="286.91" y="683.00" width="10.51" height="10.50" fill="#eeeff0"/><rect x="76.75" y="693.50" width="10.51" height="10.50" fill="#dedfe0"/><rect x="87.26" y="693.50" width="10.51" height="10.50" fill="#cccdce"/><rect x="97.77" y="693.50" width="10.51" height="10.50" fill="#e2e3e4"/><rect x="108.27" y="693.50" width="10.51" height="10.50" fill="#c6c7c8"/><rect x="118.78" y="693.50" width="10.51" height="10.50" fill="#c6c7c8"/><rect x="129.29" y="693.50" width="10.51" height="10.50" fill="#d0d1d2"/><rect x="139.80" y="693.50" width="10.51" height="10.50" fill="#d6d7d8"/><rect x="150.31" y="693.50" width="10.51" height="10.50" fill="#cccdce"/><rect x="160.81" y="693.50" width="10.51" height="10.50" fill="#c8c9ca"/><rect x="171.32" y="693.50" width="10.51" height="10.50" fill="#d0d1d2"/><rect x="181.83" y="693.50" width="10.51" height="10.50" fill="#cccdce"/><rect x="192.34" y="693.50" width="10.51" height="10.50" fill="#d2d3d4"/><rect x="202.85" y="693.50" width="10.51" height="10.50" fill="#cccdce"/><rect x="213.35" y="693.50" width="10.51" height="10.50" fill="#cccdce"/><rect x="223.86" y="693.50" width="10.51" height="10.50" fill="#cccdce"/><rect x="234.37" y="693.50" width="10.51" height="10.50" fill="#cacbcc"/><rect x="244.88" y="693.50" width="10.51" height="10.50" fill="#cccdce"/><rect x="255.39" y="693.50" width="10.51" height="10.50" fill="#cccdce"/><rect x="265.89" y="693.50" width="10.51" height="10.50" fill="#e6e7e8"/><rect x="276.40" y="693.50" width="10.51" height="10.50" fill="#d4d5d6"/><rect x="286.91" y="693.50" width="10.51" height="10.50" fill="#c0c1c2"/><rect x="76.75" y="714.50" width="10.51" height="10.50" fill="#fafbfc"/><rect x="87.26" y="714.50" width="10.51" height="10.50" fill="#eeeff0"/><rect x="97.77" y="714.50" width="10.51" height="10.50" fill="#e8e9ea"/><rect x="108.27" y="714.50" width="10.51" height="10.50" fill="#f6f7f8"/><rect x="118.78" y="714.50" width="10.51" height="10.50" fill="#f6f7f8"/><rect x="129.29" y="714.50" width="10.51" height="10.50" fill="#e0e1e2"/><rect x="139.80" y="714.50" width="10.51" height="10.50" fill="#eeeff0"/><rect x="150.31" y="714.50" width="10.51" height="10.50" fill="#f0f1f2"/><rect x="160.81" y="714.50" width="10.51" height="10.50" fill="#f0f1f2"/><rect x="171.32" y="714.50" width="10.51" height="10.50" fill="#f6f7f8"/><rect x="181.83" y="714.50" width="10.51" height="10.50" fill="#ecedee"/><rect x="192.34" y="714.50" width="10.51" height="10.50" fill="#e8e9ea"/><rect x="202.85" y="714.50" width="10.51" height="10.50" fill="#f0f1f2"/><rect x="213.35" y="714.50" width="10.51" height="10.50" fill="#f2f3f4"/><rect x="223.86" y="714.50" width="10.51" height="10.50" fill="#e4e5e6"/><rect x="234.37" y="714.50" width="10.51" height="10.50" fill="#e0e1e2"/><rect x="244.88" y="714.50" width="10.51" height="10.50" fill="#e8e9ea"/><rect x="255.39" y="714.50" width="10.51" height="10.50" fill="#eaebec"/><rect x="265.89" y="714.50" width="10.51" height="10.50" fill="#dcddde"/><rect x="276.40" y="714.50" width="10.51" height="10.50" fill="#f8f9fa"/><rect x="76.75" y="725.00" width="10.51" height="10.50" fill="#fafbfc"/><rect x="87.26" y="725.00" width="10.51" height="10.50" fill="#eeeff0"/><rect x="97.77" y="725.00" width="10.51" height="10.50" fill="#f4f5f6"/><rect x="108.27" y="725.00" width="10.51" height="10.50" fill="#eeeff0"/><rect x="118.78" y="725.00" width="10.51" height="10.50" fill="#f2f3f4"/><rect x="129.29" y="725.00" width="10.51" height="10.50" fill="#f0f1f2"/><rect x="139.80" y="725.00" width="10.51" height="10.50" fill="#f2f3f4"/><rect x="150.31" y="725.00" width="10.51" height="10.50" fill="#ffffff"/><rect x="160.81" y="725.00" width="10.51" height="10.50" fill="#f6f7f8"/><rect x="171.32" y="725.00" width="10.51" height="10.50" fill="#f6f7f8"/><rect x="181.83" y="725.00" width="10.51" height="10.50" fill="#f4f5f6"/><rect x="192.34" y="725.00" width="10.51" height="10.50" fill="#eeeff0"/><rect x="202.85" y="725.00" width="10.51" height="10.50" fill="#eeeff0"/><rect x="213.35" y="725.00" width="10.51" height="10.50" fill="#ffffff"/><rect x="223.86" y="725.00" width="10.51" height="10.50" fill="#f6f7f8"/><rect x="234.37" y="725.00" width="10.51" height="10.50" fill="#e8e9ea"/><rect x="244.88" y="725.00" width="10.51" height="10.50" fill="#e8e9ea"/><rect x="255.39" y="725.00" width="10.51" height="10.50" fill="#eaebec"/><rect x="265.89" y="725.00" width="10.51" height="10.50" fill="#e0e1e2"/><rect x="276.40" y="725.00" width="10.51" height="10.50" fill="#f8f9fa"/><rect x="108.27" y="735.50" width="10.51" height="10.50" fill="#f4f5f6"/><rect x="118.78" y="735.50" width="10.51" height="10.50" fill="#eeeff0"/><rect x="129.29" y="735.50" width="10.51" height="10.50" fill="#eeeff0"/><rect x="139.80" y="735.50" width="10.51" height="10.50" fill="#eeeff0"/><rect x="150.31" y="735.50" width="10.51" height="10.50" fill="#fcfdfe"/><rect x="160.81" y="735.50" width="10.51" height="10.50" fill="#fafbfc"/><rect x="171.32" y="735.50" width="10.51" height="10.50" fill="#eeeff0"/><rect x="181.83" y="735.50" width="10.51" height="10.50" fill="#fafbfc"/><rect x="192.34" y="735.50" width="10.51" height="10.50" fill="#fcfdfe"/><rect x="202.85" y="735.50" width="10.51" height="10.50" fill="#f4f5f6"/><rect x="213.35" y="735.50" width="10.51" height="10.50" fill="#f2f3f4"/><rect x="223.86" y="735.50" width="10.51" height="10.50" fill="#eeeff0"/><rect x="234.37" y="735.50" width="10.51" height="10.50" fill="#eeeff0"/><rect x="244.88" y="735.50" width="10.51" height="10.50" fill="#f4f5f6"/><rect x="255.39" y="735.50" width="10.51" height="10.50" fill="#f4f5f6"/><rect x="265.89" y="735.50" width="10.51" height="10.50" fill="#eeeff0"/><rect x="276.40" y="735.50" width="10.51" height="10.50" fill="#eeeff0"/><rect x="286.91" y="735.50" width="10.51" height="10.50" fill="#eeeff0"/><rect x="297.42" y="735.50" width="10.51" height="10.50" fill="#f2f3f4"/><rect x="76.75" y="746.00" width="10.51" height="10.50" fill="#dcdee0"/><rect x="87.26" y="746.00" width="10.51" height="10.50" fill="#c4c6c8"/><rect x="97.77" y="746.00" width="10.51" height="10.50" fill="#c2c4c6"/><rect x="108.27" y="746.00" width="10.51" height="10.50" fill="#c4c6c8"/><rect x="118.78" y="746.00" width="10.51" height="10.50" fill="#dcdee0"/><rect x="129.29" y="746.00" width="10.51" height="10.50" fill="#e0e2e4"/><rect x="139.80" y="746.00" width="10.51" height="10.50" fill="#e0e2e4"/><rect x="150.31" y="746.00" width="10.51" height="10.50" fill="#e0e2e4"/><rect x="160.81" y="746.00" width="10.51" height="10.50" fill="#e0e2e4"/><rect x="171.32" y="746.00" width="10.51" height="10.50" fill="#e0e2e4"/><rect x="181.83" y="746.00" width="10.51" height="10.50" fill="#e0e2e4"/><rect x="192.34" y="746.00" width="10.51" height="10.50" fill="#e8eaec"/><rect x="202.85" y="746.00" width="10.51" height="10.50" fill="#dcdee0"/><rect x="213.35" y="746.00" width="10.51" height="10.50" fill="#dcdee0"/><rect x="223.86" y="746.00" width="10.51" height="10.50" fill="#dcdee0"/><rect x="234.37" y="746.00" width="10.51" height="10.50" fill="#dee0e2"/><rect x="244.88" y="746.00" width="10.51" height="10.50" fill="#e0e2e4"/><rect x="255.39" y="746.00" width="10.51" height="10.50" fill="#e0e2e4"/><rect x="265.89" y="746.00" width="10.51" height="10.50" fill="#e0e2e4"/><rect x="276.40" y="746.00" width="10.51" height="10.50" fill="#d2d4d6"/><rect x="286.91" y="746.00" width="10.51" height="10.50" fill="#d4d6d8"/><rect x="297.42" y="746.00" width="10.51" height="10.50" fill="#d6d8da"/><rect x="76.75" y="756.50" width="10.51" height="10.50" fill="#f0f1f2"/><rect x="87.26" y="756.50" width="10.51" height="10.50" fill="#eaebec"/><rect x="76.75" y="767.00" width="10.51" height="10.50" fill="#f0f1f2"/><rect x="87.26" y="767.00" width="10.51" height="10.50" fill="#eaebec"/><rect x="87.26" y="777.50" width="10.51" height="9.50" fill="#f0f1f2"/><rect x="97.77" y="777.50" width="10.51" height="9.50" fill="#f4f5f6"/><rect x="108.27" y="777.50" width="10.51" height="9.50" fill="#f6f7f8"/><rect x="118.78" y="777.50" width="10.51" height="9.50" fill="#f8f9fa"/><rect x="129.29" y="777.50" width="10.51" height="9.50" fill="#f6f7f8"/><rect x="139.80" y="777.50" width="10.51" height="9.50" fill="#fafbfc"/><rect x="150.31" y="777.50" width="10.51" height="9.50" fill="#e0e1e2"/><rect x="160.81" y="777.50" width="10.51" height="9.50" fill="#f4f5f6"/><rect x="171.32" y="777.50" width="10.51" height="9.50" fill="#f4f5f6"/><rect x="181.83" y="777.50" width="10.51" height="9.50" fill="#f6f7f8"/><rect x="192.34" y="777.50" width="10.51" height="9.50" fill="#f0f1f2"/><rect x="202.85" y="777.50" width="10.51" height="9.50" fill="#f8f9fa"/><rect x="213.35" y="777.50" width="10.51" height="9.50" fill="#f6f7f8"/><rect x="223.86" y="777.50" width="10.51" height="9.50" fill="#f0f1f2"/><rect x="234.37" y="777.50" width="10.51" height="9.50" fill="#e0e1e2"/><rect x="244.88" y="777.50" width="10.51" height="9.50" fill="#f6f7f8"/><rect x="255.39" y="777.50" width="10.51" height="9.50" fill="#f0f1f2"/><rect x="265.89" y="777.50" width="10.51" height="9.50" fill="#f8f9fa"/><rect x="276.40" y="777.50" width="10.51" height="9.50" fill="#eeeff0"/><rect x="286.91" y="777.50" width="10.51" height="9.50" fill="#f0f1f2"/><rect x="528.59" y="578.00" width="10.51" height="10.50" fill="#c9cacb"/><rect x="539.10" y="578.00" width="10.51" height="10.50" fill="#e6e7e8"/><rect x="528.59" y="588.50" width="10.51" height="10.50" fill="#f0f1f2"/><rect x="539.10" y="588.50" width="10.51" height="10.50" fill="#f6f7f8"/><rect x="486.56" y="599.00" width="10.51" height="10.50" fill="#d8d9da"/><rect x="497.07" y="599.00" width="10.51" height="10.50" fill="#d6d7d8"/><rect x="507.58" y="599.00" width="10.51" height="10.50" fill="#dcddde"/><rect x="518.09" y="599.00" width="10.51" height="10.50" fill="#e4e5e6"/><rect x="528.59" y="599.00" width="10.51" height="10.50" fill="#d4d5d6"/><rect x="539.10" y="599.00" width="10.51" height="10.50" fill="#eeeff0"/><rect x="528.59" y="620.00" width="10.51" height="10.50" fill="#f2f3f4"/><rect x="539.10" y="620.00" width="10.51" height="10.50" fill="#f2f3f4"/><rect x="528.59" y="630.50" width="10.51" height="10.50" fill="#dcddde"/><rect x="539.10" y="630.50" width="10.51" height="10.50" fill="#cccdce"/><rect x="528.59" y="651.50" width="10.51" height="10.50" fill="#f2f3f4"/><rect x="539.10" y="651.50" width="10.51" height="10.50" fill="#f4f5f6"/><rect x="528.59" y="662.00" width="10.51" height="10.50" fill="#e4e5e6"/><rect x="539.10" y="662.00" width="10.51" height="10.50" fill="#eaebec"/><rect x="528.59" y="683.00" width="10.51" height="10.50" fill="#e8e9ea"/><rect x="539.10" y="683.00" width="10.51" height="10.50" fill="#e8e9ea"/><rect x="528.59" y="693.50" width="10.51" height="10.50" fill="#dcddde"/><rect x="539.10" y="693.50" width="10.51" height="10.50" fill="#dedfe0"/><rect x="528.59" y="714.50" width="10.51" height="10.50" fill="#ecedee"/><rect x="539.10" y="714.50" width="10.51" height="10.50" fill="#e8e9ea"/><rect x="528.59" y="725.00" width="10.51" height="10.50" fill="#ecedee"/><rect x="539.10" y="725.00" width="10.51" height="10.50" fill="#eaebec"/><rect x="528.59" y="746.00" width="10.51" height="10.50" fill="#f0f1f2"/><rect x="539.10" y="746.00" width="10.51" height="10.50" fill="#e4e5e6"/><rect x="528.59" y="756.50" width="10.51" height="10.50" fill="#f0f1f2"/><rect x="539.10" y="756.50" width="10.51" height="10.50" fill="#e2e3e4"/><rect x="528.59" y="777.50" width="10.51" height="9.50" fill="#f2f3f4"/><rect x="539.10" y="777.50" width="10.51" height="9.50" fill="#f2f3f4"/><rect x="728.25" y="578.00" width="10.51" height="10.50" fill="#c8c9ca"/><rect x="738.75" y="578.00" width="10.51" height="10.50" fill="#eaebec"/><rect x="749.26" y="578.00" width="10.51" height="10.50" fill="#cacbcc"/><rect x="728.25" y="588.50" width="10.51" height="10.50" fill="#eaebec"/><rect x="738.75" y="588.50" width="10.51" height="10.50" fill="#eaebec"/><rect x="749.26" y="588.50" width="10.51" height="10.50" fill="#eaebec"/><rect x="707.23" y="599.00" width="10.51" height="10.50" fill="#cccdce"/><rect x="717.74" y="599.00" width="10.51" height="10.50" fill="#cccdce"/><rect x="728.25" y="599.00" width="10.51" height="10.50" fill="#e6e7e8"/><rect x="738.75" y="599.00" width="10.51" height="10.50" fill="#d6d7d8"/><rect x="749.26" y="599.00" width="10.51" height="10.50" fill="#d8d9da"/><rect x="738.75" y="620.00" width="10.51" height="10.50" fill="#f2f3f4"/><rect x="749.26" y="620.00" width="10.51" height="10.50" fill="#eeeff0"/><rect x="738.75" y="630.50" width="10.51" height="10.50" fill="#dcddde"/><rect x="749.26" y="630.50" width="10.51" height="10.50" fill="#cccdce"/><rect x="759.77" y="630.50" width="10.51" height="10.50" fill="#e8e9ea"/><rect x="738.75" y="651.50" width="10.51" height="10.50" fill="#f6f7f8"/><rect x="749.26" y="651.50" width="10.51" height="10.50" fill="#eeeff0"/><rect x="738.75" y="662.00" width="10.51" height="10.50" fill="#eeeff0"/><rect x="749.26" y="662.00" width="10.51" height="10.50" fill="#d4d5d6"/><rect x="759.77" y="662.00" width="10.51" height="10.50" fill="#f2f3f4"/><rect x="738.75" y="683.00" width="10.51" height="10.50" fill="#f0f1f2"/><rect x="749.26" y="683.00" width="10.51" height="10.50" fill="#e6e7e8"/><rect x="759.77" y="683.00" width="10.51" height="10.50" fill="#f0f1f2"/><rect x="738.75" y="693.50" width="10.51" height="10.50" fill="#eeeff0"/><rect x="749.26" y="693.50" width="10.51" height="10.50" fill="#d4d5d6"/><rect x="759.77" y="693.50" width="10.51" height="10.50" fill="#eeeff0"/><rect x="738.75" y="714.50" width="10.51" height="10.50" fill="#eeeff0"/><rect x="749.26" y="714.50" width="10.51" height="10.50" fill="#e4e5e6"/><rect x="738.75" y="725.00" width="10.51" height="10.50" fill="#eeeff0"/><rect x="749.26" y="725.00" width="10.51" height="10.50" fill="#e0e1e2"/><rect x="749.26" y="746.00" width="10.51" height="10.50" fill="#dcddde"/><rect x="759.77" y="746.00" width="10.51" height="10.50" fill="#eeeff0"/><rect x="749.26" y="756.50" width="10.51" height="10.50" fill="#dadbdc"/><rect x="759.77" y="756.50" width="10.51" height="10.50" fill="#eeeff0"/><rect x="738.75" y="777.50" width="10.51" height="9.50" fill="#f8f9fa"/><rect x="749.26" y="777.50" width="10.51" height="9.50" fill="#f2f3f4"/><rect x="759.77" y="777.50" width="10.51" height="9.50" fill="#f8f9fa"/><rect x="948.91" y="578.00" width="10.51" height="10.50" fill="#e0e2e4"/><rect x="959.42" y="578.00" width="10.51" height="10.50" fill="#e4e6e8"/><rect x="969.93" y="578.00" width="10.51" height="10.50" fill="#c2c4c6"/><rect x="980.44" y="578.00" width="10.51" height="10.50" fill="#c4c6c8"/><rect x="948.91" y="588.50" width="10.51" height="10.50" fill="#f0f2f4"/><rect x="959.42" y="588.50" width="10.51" height="10.50" fill="#e4e6e8"/><rect x="969.93" y="588.50" width="10.51" height="10.50" fill="#e4e6e8"/><rect x="980.44" y="588.50" width="10.51" height="10.50" fill="#e4e6e8"/><rect x="917.39" y="599.00" width="10.51" height="10.50" fill="#eceef0"/><rect x="927.90" y="599.00" width="10.51" height="10.50" fill="#cbcdcf"/><rect x="938.41" y="599.00" width="10.51" height="10.50" fill="#ccced0"/><rect x="948.91" y="599.00" width="10.51" height="10.50" fill="#dcdee0"/><rect x="959.42" y="599.00" width="10.51" height="10.50" fill="#c4c6c8"/><rect x="969.93" y="599.00" width="10.51" height="10.50" fill="#d4d6d8"/><rect x="980.44" y="599.00" width="10.51" height="10.50" fill="#d6d8da"/><rect x="969.93" y="620.00" width="10.51" height="10.50" fill="#eaecee"/><rect x="980.44" y="620.00" width="10.51" height="10.50" fill="#f0f2f4"/><rect x="948.91" y="630.50" width="10.51" height="10.50" fill="#e6e8eb"/><rect x="959.42" y="630.50" width="10.51" height="10.50" fill="#d0d2d5"/><rect x="969.93" y="630.50" width="10.51" height="10.50" fill="#b9bbbe"/><rect x="980.44" y="630.50" width="10.51" height="10.50" fill="#c8cacd"/><rect x="959.42" y="651.50" width="10.51" height="10.50" fill="#ccced1"/><rect x="969.93" y="651.50" width="10.51" height="10.50" fill="#ccced1"/><rect x="980.44" y="651.50" width="10.51" height="10.50" fill="#d0d2d5"/><rect x="959.42" y="662.00" width="10.51" height="10.50" fill="#c4c7ca"/><rect x="969.93" y="662.00" width="10.51" height="10.50" fill="#b5b8bb"/><rect x="980.44" y="662.00" width="10.51" height="10.50" fill="#c4c7ca"/><rect x="948.91" y="683.00" width="10.51" height="10.50" fill="#eceef0"/><rect x="959.42" y="683.00" width="10.51" height="10.50" fill="#eceef0"/><rect x="969.93" y="683.00" width="10.51" height="10.50" fill="#e4e6e8"/><rect x="980.44" y="683.00" width="10.51" height="10.50" fill="#e4e6e8"/><rect x="948.91" y="693.50" width="10.51" height="10.50" fill="#eceef0"/><rect x="959.42" y="693.50" width="10.51" height="10.50" fill="#d8dadc"/><rect x="969.93" y="693.50" width="10.51" height="10.50" fill="#d8dadc"/><rect x="980.44" y="693.50" width="10.51" height="10.50" fill="#d4d6d8"/><rect x="959.42" y="714.50" width="10.51" height="10.50" fill="#e0e2e4"/><rect x="969.93" y="714.50" width="10.51" height="10.50" fill="#d4d6d8"/><rect x="980.44" y="714.50" width="10.51" height="10.50" fill="#e0e2e4"/><rect x="959.42" y="725.00" width="10.51" height="10.50" fill="#e0e2e4"/><rect x="969.93" y="725.00" width="10.51" height="10.50" fill="#dcdee0"/><rect x="980.44" y="725.00" width="10.51" height="10.50" fill="#dee0e2"/><rect x="948.91" y="746.00" width="10.51" height="10.50" fill="#e8eaec"/><rect x="959.42" y="746.00" width="10.51" height="10.50" fill="#e8eaec"/><rect x="969.93" y="746.00" width="10.51" height="10.50" fill="#d8dadc"/><rect x="980.44" y="746.00" width="10.51" height="10.50" fill="#e0e2e4"/><rect x="948.91" y="756.50" width="10.51" height="10.50" fill="#e8eaec"/><rect x="959.42" y="756.50" width="10.51" height="10.50" fill="#e8eaec"/><rect x="969.93" y="756.50" width="10.51" height="10.50" fill="#d8dadc"/><rect x="980.44" y="756.50" width="10.51" height="10.50" fill="#d6d8da"/><rect x="959.42" y="777.50" width="10.51" height="9.50" fill="#e6e8ea"/><rect x="969.93" y="777.50" width="10.51" height="9.50" fill="#e0e2e4"/><rect x="980.44" y="777.50" width="10.51" height="9.50" fill="#e4e6e8"/><rect x="1190.60" y="578.00" width="10.51" height="10.50" fill="#fafbfc"/><rect x="1201.11" y="578.00" width="10.51" height="10.50" fill="#c8c9ca"/><rect x="1211.61" y="578.00" width="10.51" height="10.50" fill="#e4e5e6"/><rect x="1222.12" y="578.00" width="10.51" height="10.50" fill="#e4e5e6"/><rect x="1201.11" y="588.50" width="10.51" height="10.50" fill="#f0f1f2"/><rect x="1211.61" y="588.50" width="10.51" height="10.50" fill="#f0f1f2"/><rect x="1222.12" y="588.50" width="10.51" height="10.50" fill="#f2f3f4"/><rect x="1169.58" y="599.00" width="10.51" height="10.50" fill="#d4d5d6"/><rect x="1180.09" y="599.00" width="10.51" height="10.50" fill="#d4d5d6"/><rect x="1190.60" y="599.00" width="10.51" height="10.50" fill="#d8d9da"/><rect x="1201.11" y="599.00" width="10.51" height="10.50" fill="#dcddde"/><rect x="1211.61" y="599.00" width="10.51" height="10.50" fill="#d8d9da"/><rect x="1222.12" y="599.00" width="10.51" height="10.50" fill="#f0f1f2"/><rect x="1201.11" y="620.00" width="10.51" height="10.50" fill="#f6f7f8"/><rect x="1211.61" y="620.00" width="10.51" height="10.50" fill="#f6f7f8"/><rect x="1222.12" y="620.00" width="10.51" height="10.50" fill="#f6f7f8"/><rect x="1201.11" y="630.50" width="10.51" height="10.50" fill="#d8d9da"/><rect x="1211.61" y="630.50" width="10.51" height="10.50" fill="#cfd0d1"/><rect x="1222.12" y="630.50" width="10.51" height="10.50" fill="#dcddde"/><rect x="1201.11" y="651.50" width="10.51" height="10.50" fill="#f6f7f8"/><rect x="1211.61" y="651.50" width="10.51" height="10.50" fill="#f6f7f8"/><rect x="1222.12" y="651.50" width="10.51" height="10.50" fill="#f6f7f8"/><rect x="1201.11" y="662.00" width="10.51" height="10.50" fill="#f0f1f2"/><rect x="1211.61" y="662.00" width="10.51" height="10.50" fill="#e0e1e2"/><rect x="1222.12" y="662.00" width="10.51" height="10.50" fill="#e4e5e6"/><rect x="1201.11" y="683.00" width="10.51" height="10.50" fill="#e8e9ea"/><rect x="1211.61" y="683.00" width="10.51" height="10.50" fill="#e8e9ea"/><rect x="1222.12" y="683.00" width="10.51" height="10.50" fill="#e8e9ea"/><rect x="1201.11" y="693.50" width="10.51" height="10.50" fill="#dcddde"/><rect x="1211.61" y="693.50" width="10.51" height="10.50" fill="#e0e1e2"/><rect x="1222.12" y="693.50" width="10.51" height="10.50" fill="#e0e1e2"/><rect x="1201.11" y="714.50" width="10.51" height="10.50" fill="#eaebec"/><rect x="1211.61" y="714.50" width="10.51" height="10.50" fill="#eaebec"/><rect x="1222.12" y="714.50" width="10.51" height="10.50" fill="#eaebec"/><rect x="1201.11" y="725.00" width="10.51" height="10.50" fill="#eaebec"/><rect x="1211.61" y="725.00" width="10.51" height="10.50" fill="#eaebec"/><rect x="1222.12" y="725.00" width="10.51" height="10.50" fill="#eaebec"/><rect x="1201.11" y="746.00" width="10.51" height="10.50" fill="#e6e7e8"/><rect x="1211.61" y="746.00" width="10.51" height="10.50" fill="#e2e3e4"/><rect x="1222.12" y="746.00" width="10.51" height="10.50" fill="#e6e7e8"/><rect x="1201.11" y="756.50" width="10.51" height="10.50" fill="#e4e5e6"/><rect x="1211.61" y="756.50" width="10.51" height="10.50" fill="#dedfe0"/><rect x="1222.12" y="756.50" width="10.51" height="10.50" fill="#e6e7e8"/><rect x="1201.11" y="777.50" width="10.51" height="9.50" fill="#eeeff0"/><rect x="1211.61" y="777.50" width="10.51" height="9.50" fill="#eeeff0"/><rect x="1222.12" y="777.50" width="10.51" height="9.50" fill="#eeeff0"/></svg>
<div class="a" style="left:36px;top:617.8px;width:30.3px;height:30.2px;background:#f8f9fa;border-top:1px solid #e6e8eb"></div>
<div class="a" style="left:36px;top:648.0px;width:30.3px;height:30.8px;background:#ffffff;border-top:1px solid #e6e8eb"></div>
<div class="a" style="left:36px;top:678.8px;width:30.3px;height:31.0px;background:#f8f9fa;border-top:1px solid #e6e8eb"></div>
<div class="a" style="left:36px;top:709.8px;width:30.3px;height:30.3px;background:#ffffff;border-top:1px solid #e6e8eb"></div>
<div class="a" style="left:36px;top:740.1px;width:30.3px;height:33.2px;background:#f8f9fa;border-top:1px solid #e6e8eb"></div>
<div class="a" style="left:36px;top:773.3px;width:30.3px;height:31.2px;background:#ffffff;border-top:1px solid #e6e8eb"></div>
<div class="L">
<span class="t" style="left:16.92px;top:25px;font-size:10px;color:#ffffff;transform:scaleX(1.0303);">す</span>
<span class="t" style="left:37.17px;top:24px;font-size:11px;color:#33373a;font-weight:500;transform:scaleX(0.9325);">すべてのユーザー</span>
<span class="t" style="left:144.53px;top:24px;font-size:10.5px;color:#33373a;font-weight:500;transform:scaleX(0.9426);">比較対象を追加</span>
<span class="t" style="left:1067.21px;top:24px;font-size:10px;color:#3c4043;transform:scaleX(0.9874);">過去 28 日間</span>
<span class="t" style="left:1131.77px;top:24px;font-size:11px;color:#3c4043;transform:scaleX(1.0543);">5月13日〜2024年6月9日</span>
<span class="t" style="left:9.18px;top:63px;font-size:17.5px;color:#3c4043;transform:scaleX(1.0392);">クエリ: Google のオーガニック検索クエリ</span>
<span class="t" style="left:35.80px;top:96px;font-size:10.5px;color:#303437;transform:scaleX(0.9579);">ストリーム ID 完全一致 ウ...</span>
<span class="t" style="left:35.54px;top:156px;font-size:11.5px;color:#3c4043;transform:scaleX(0.9952);">「Google のオーガニック検索のクリック数」の推移</span>
<span class="t" style="left:624.25px;top:156px;font-size:12px;color:#3c4043;transform:scaleX(1.3750);">日</span>
<span class="t" style="left:701.84px;top:189px;font-size:10.3px;color:#72767b;transform:scaleX(0.9209);">50</span>
<span class="t" style="left:702.08px;top:240px;font-size:10.3px;color:#72767b;transform:scaleX(0.9000);">40</span>
<span class="t" style="left:701.84px;top:290px;font-size:10.3px;color:#72767b;transform:scaleX(0.9209);">30</span>
<span class="t" style="left:701.84px;top:341px;font-size:10.3px;color:#72767b;transform:scaleX(0.9209);">20</span>
<span class="t" style="left:701.59px;top:392px;font-size:10.3px;color:#72767b;transform:scaleX(0.9429);">10</span>
<span class="t" style="left:707.14px;top:429px;font-size:10.3px;color:#72767b;transform:scaleX(0.9200);">0</span>
<span class="t" style="left:184.05px;top:445px;font-size:10.3px;color:#72767b;transform:scaleX(0.9951);">19</span>
<span class="t" style="left:183.77px;top:456px;font-size:10px;color:#72767b;transform:scaleX(1.0566);">5月</span>
<span class="t" style="left:345.21px;top:445px;font-size:10.3px;color:#72767b;transform:scaleX(0.9714);">26</span>
<span class="t" style="left:511.71px;top:445px;font-size:10.3px;color:#72767b;transform:scaleX(0.9714);">02</span>
<span class="t" style="left:509.47px;top:456px;font-size:10px;color:#72767b;transform:scaleX(1.0566);">6月</span>
<span class="t" style="left:672.91px;top:445px;font-size:10.3px;color:#72767b;transform:scaleX(0.9714);">09</span>
<span class="t" style="left:763.00px;top:156px;font-size:11.5px;color:#3c4043;transform:scaleX(0.9926);">Google のオーガニック検索のクリック数: Google のオーガニック検索クエリ別</span>
<span class="t" style="left:66.76px;top:498px;font-size:11px;color:#5f6368;transform:scaleX(0.9767);">検索...</span>
<span class="t" style="left:852.26px;top:498px;font-size:11px;color:#3c4043;transform:scaleX(0.9822);">1 ページあたりの行数:</span>
<span class="t" style="left:979.54px;top:497px;font-size:11.5px;color:#202124;transform:scaleX(1.0174);">10</span>
<span class="t" style="left:1047.35px;top:498px;font-size:11px;color:#3c4043;transform:scaleX(0.9853);">移動:</span>
<span class="t" style="left:1094.69px;top:497px;font-size:11.5px;color:#3c4043;transform:scaleX(0.6857);">1</span>
<span class="t" style="left:1161.63px;top:497px;font-size:11px;color:#3c4043;transform:scaleX(1.0303);">1〜10/802</span>
<span class="t" style="left:83.20px;top:534px;font-size:11.5px;color:#676b70;">Google のオーガニック検索クエリ</span>
<span class="t" style="left:369.51px;top:532px;font-size:11.5px;color:#676b70;transform:scaleX(0.9817);"><b>Google</b> のオーガニック検索のクリ</span>
<span class="t" style="left:508.80px;top:549px;font-size:11.5px;color:#676b70;transform:scaleX(1.0500);">ック数</span>
<span class="t" style="left:586.81px;top:532px;font-size:11.5px;color:#676b70;transform:scaleX(0.9702);"><b>Google</b> のオーガニック検索の表示</span>
<span class="t" style="left:738.99px;top:549px;font-size:11.5px;color:#676b70;transform:scaleX(1.0093);">回数</span>
<span class="t" style="left:803.51px;top:532px;font-size:11.5px;color:#676b70;transform:scaleX(0.9805);"><b>Google</b> のオーガニック検索のクリッ</span>
<span class="t" style="left:966.69px;top:549px;font-size:11.5px;color:#676b70;transform:scaleX(1.0494);">ク率</span>
<span class="t" style="left:1040.51px;top:532px;font-size:11.5px;color:#676b70;transform:scaleX(0.9767);"><b>Google</b> のオーガニック検索の平均掲</span>
<span class="t" style="left:1193.50px;top:549px;font-size:11.5px;color:#676b70;">載順位</span>
<span class="t" style="left:48.92px;top:628px;font-size:11.5px;color:#34383b;">1</span>
<span class="t" style="left:49.17px;top:659px;font-size:11.5px;color:#34383b;">2</span>
<span class="t" style="left:49.05px;top:690px;font-size:11.5px;color:#34383b;">3</span>
<span class="t" style="left:49.17px;top:720px;font-size:11.5px;color:#34383b;">4</span>
<span class="t" style="left:49.05px;top:752px;font-size:11.5px;color:#34383b;">5</span>
<span class="t" style="left:49.05px;top:783px;font-size:11.5px;color:#34383b;">6</span>
</div>
</body></html>
